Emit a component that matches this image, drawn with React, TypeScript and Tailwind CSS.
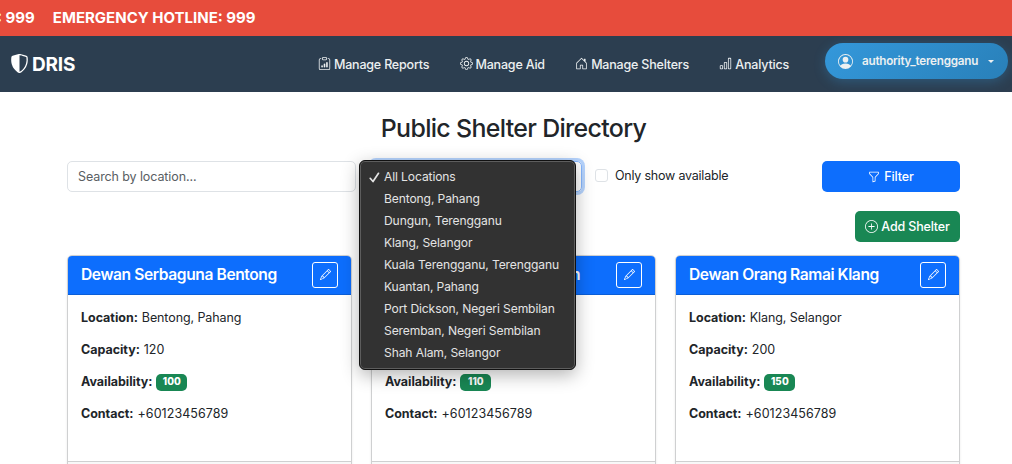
import type { ReactNode } from "react";
import {
  BsBarChart,
  BsClipboardData,
  BsFunnel,
  BsGear,
  BsHouseDoor,
  BsPencil,
  BsPersonCircle,
  BsPlusCircle,
  BsShieldShaded,
} from "react-icons/bs";

const shelters = [
  { name: "Dewan Serbaguna Bentong", location: "Bentong, Pahang", capacity: 120, available: 100 },
  { name: "Dewan Serbaguna Kuantan", location: "Kuantan, Pahang", capacity: 150, available: 110 },
  { name: "Dewan Orang Ramai Klang", location: "Klang, Selangor", capacity: 200, available: 150 },
];

const locations = [
  "All Locations",
  "Bentong, Pahang",
  "Dungun, Terengganu",
  "Klang, Selangor",
  "Kuala Terengganu, Terengganu",
  "Kuantan, Pahang",
  "Port Dickson, Negeri Sembilan",
  "Seremban, Negeri Sembilan",
  "Shah Alam, Selangor",
];

function NavLink({ icon, children }: { icon: ReactNode; children: ReactNode }) {
  return (
    <a className="flex items-center gap-[3px] text-[12.5px] leading-5 font-medium tracking-[-0.2px] text-[#ecf0f1]">
      <span className="-mt-px">{icon}</span>
      <span className="pt-px">{children}</span>
    </a>
  );
}

function Field({ label, children }: { label: string; children: ReactNode }) {
  return (
    <p className="flex h-5 items-center gap-1">
      <strong className="font-bold">{label}:</strong>
      {children}
    </p>
  );
}

function ShelterCard({ shelter }: { shelter: (typeof shelters)[number] }) {
  return (
    <article className="h-[250px] overflow-hidden rounded-[5px] border border-[#cfd0d1] bg-white shadow-[0_1px_3px_rgba(0,0,0,0.08)]">
      <header className="flex h-[39px] items-center justify-between border-b border-[#0b5ed7] bg-[#0d6efd] px-[13px] text-white">
        <h2 className="text-[15.6px] font-semibold tracking-[-0.41px] whitespace-nowrap">{shelter.name}</h2>
        <button className="flex size-[26px] items-center justify-center rounded-[3px] border border-white pb-px">
          <BsPencil size={11} />
        </button>
      </header>
      <div className="flex h-[167px] flex-col gap-3 border-b border-[#cfd0d1] px-[13px] pt-[13px] text-[12.5px] tracking-[-0.03px]">
        <Field label="Location">
          <span className="tracking-[-0.1px]">{shelter.location}</span>
        </Field>
        <Field label="Capacity">{shelter.capacity}</Field>
        <Field label="Availability">
          <span className="mt-px flex h-[17px] w-[31px] items-center justify-center rounded-[5px] bg-[#198754] text-[9.8px] font-extrabold tracking-[0.15px] text-white">
            {shelter.available}
          </span>
        </Field>
        <Field label="Contact">
          <span className="tracking-[0.06px]">+60123456789</span>
        </Field>
      </div>
      <footer className="h-full bg-[#f8f8f8]" />
    </article>
  );
}

function LocationMenu() {
  return (
    <div className="absolute top-[-2px] left-[-13px] z-10 h-[210px] w-[217px] rounded-[6px] border border-[#111] bg-[#323232] pt-[5px] text-[12.1px] tracking-[-0.12px] text-[#e4e4e4] shadow-[inset_0_0_0_1px_#5d5d5d,0_5px_18px_rgba(0,0,0,0.3)]">
      {locations.map((name, i) => (
        <div key={name} className="flex h-[22px] items-center whitespace-nowrap">
          <span className="flex w-6 justify-center pl-1">
            {i === 0 && (
              <svg width="11" height="11" viewBox="0 0 11 11" fill="none" stroke="currentColor" strokeWidth="1.7" strokeLinecap="round" strokeLinejoin="round">
                <path d="M1.2 6.3 4 9.5 9.5 1.3" />
              </svg>
            )}
          </span>
          <span>{name}</span>
        </div>
      ))}
    </div>
  );
}

export default function App() {
  return (
    <div className="h-[464px] w-[1012px] overflow-hidden bg-white font-['Inter','Liberation_Sans',sans-serif] text-[#212529]">
      <div className="flex h-9 items-center overflow-hidden bg-[#e74c3c] text-[15px] font-bold whitespace-nowrap text-white">
        <span className="-ml-[3px]">: 999</span>
        <span className="ml-[18px]">EMERGENCY HOTLINE: 999</span>
      </div>
      <nav className="flex h-14 items-center bg-[#2c3e50] pl-[10px] text-white">
        <div className="flex w-[308px] items-center gap-[3px]">
          <BsShieldShaded size={19} className="-mt-[2px]" />
          <span className="pt-[2px] text-[19px] font-bold tracking-[-0.2px]">DRIS</span>
        </div>
        <div className="flex w-[507px] gap-[30.3px]">
          <NavLink icon={<BsClipboardData size={13} />}>Manage Reports</NavLink>
          <NavLink icon={<BsGear size={13} />}>Manage Aid</NavLink>
          <NavLink icon={<BsHouseDoor size={13} />}>Manage Shelters</NavLink>
          <NavLink icon={<BsBarChart size={13} />}>Analytics</NavLink>
        </div>
        <button className="-mt-[6px] flex h-9 w-[183px] items-center rounded-full bg-linear-135 from-[#3498db] to-[#2980b9] pl-[13px] text-[#ecf0f1] shadow-[0_3px_12px_rgba(52,152,219,0.3)]">
          <BsPersonCircle size={15} />
          <span className="ml-[9px] pt-[2px] text-[11.7px] font-semibold tracking-[-0.24px]">authority_terengganu</span>
          <span className="ml-[10px] border-x-[3px] border-t-[3px] border-x-transparent border-t-[#ecf0f1]" />
        </button>
      </nav>
      <main className="ml-[67px] w-[893px]">
        <h1 className="h-[69px] pt-[20px] text-center text-[24.9px] leading-8 font-medium tracking-[-0.66px]">Public Shelter Directory</h1>
        <div className="flex h-[31px]">
          <div className="flex w-[289px] items-center rounded-[5px] border border-[#dee2e6] pt-[2px] pl-[10px] text-[12.5px] tracking-[-0.1px] text-[#595e63]">Search by location...</div>
          <div className="relative ml-[15px] w-[211px] rounded-[5px] border border-[#86b7fe] shadow-[0_0_0_3px_#b6d4fe]">
            <LocationMenu />
          </div>
          <label className="ml-[13px] flex h-[29px] items-center text-[12.5px] tracking-[-0.22px]">
            <span className="size-[13px] rounded-[3px] border border-[#dee2e6]" />
            <span className="ml-[7px] pt-[2px]">Only show available</span>
          </label>
          <button className="ml-auto flex w-[138px] items-center justify-center gap-1 rounded-[5px] bg-[#0d6efd] text-[12.5px] font-medium tracking-[-0.1px] text-white">
            <BsFunnel size={12} />
            <span className="pt-[2px]">Filter</span>
          </button>
        </div>
        <div className="mt-[19px] flex justify-end">
          <button className="flex h-[31px] w-[105px] items-center justify-center gap-[3px] rounded-[5px] bg-[#198754] text-[12.5px] font-medium tracking-[-0.17px] text-white">
            <BsPlusCircle size={13} />
            <span className="pt-[2px]">Add Shelter</span>
          </button>
        </div>
        <section className="mt-[13px] grid grid-cols-3 gap-[19px]">
          {shelters.map((s) => (
            <ShelterCard key={s.name} shelter={s} />
          ))}
        </section>
      </main>
    </div>
  );
}
